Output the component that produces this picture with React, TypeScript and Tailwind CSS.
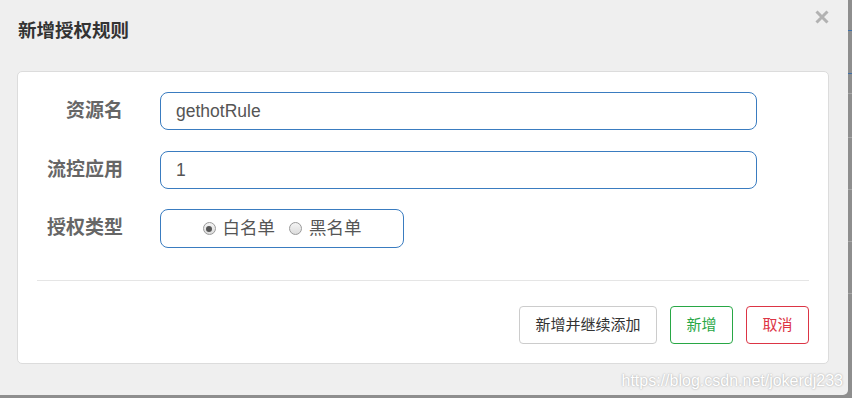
import React, { useState } from 'react';

const cjk = "font-['Liberation_Sans','Noto_Sans_CJK_SC',sans-serif]";

const Radio: React.FC<{ checked: boolean; label: string; onClick: () => void }> = ({ checked, label, onClick }) => (
  <label onClick={onClick} className="flex items-center gap-[7px] cursor-pointer">
    <span className="w-[13px] h-[13px] rounded-full border border-[#9a9a9a] bg-gradient-to-b from-[#f4f4f4] to-[#dcdcdc] flex items-center justify-center">
      {checked && <span className="w-[6px] h-[6px] rounded-full bg-[#555]" />}
    </span>
    <span className="text-[17.5px] text-[#555] leading-none">{label}</span>
  </label>
);

export default function App() {
  const [resource, setResource] = useState('gethotRule');
  const [app, setApp] = useState('1');
  const [strategy, setStrategy] = useState<'white' | 'black'>('white');

  return (
    <div className={`w-[852px] h-[398px] bg-[#8e8e8e] flex overflow-hidden ${cjk}`}>
      <div className="relative w-[848px] h-[395px] bg-[#efefef] rounded-br-[5px] shrink-0 flex flex-col">
        <div className="h-[71px] shrink-0 flex items-start justify-between pl-[18px] pr-[19px]">
          <h3 className="mt-[19px] text-[18.5px] font-bold text-[#333] leading-6">新增授权规则</h3>
          <button className="mt-[10px] w-[14px] h-[14px] cursor-pointer">
            <svg viewBox="0 0 14 14" width="14" height="14">
              <path d="M1.5 1.5 L12.5 12.5 M12.5 1.5 L1.5 12.5" stroke="#b2b2b2" strokeWidth="3" />
            </svg>
          </button>
        </div>

        <div className="ml-[17px] mr-[19px] h-[293px] shrink-0 bg-white border border-[#dcdcdc] rounded-[5px] flex flex-col px-[19px] pt-[20px]">
          <div className="flex flex-col gap-[20px]">
            <div className="flex items-center h-[38px]">
              <label className="w-[86px] text-right text-[19px] font-bold text-[#666]">资源名</label>
              <input
                value={resource}
                onChange={(e) => setResource(e.target.value)}
                className="ml-[37px] w-[597px] h-[38px] border border-[#3a7cc0] rounded-[8px] px-[15px] text-[17.5px] text-[#555] outline-none"
              />
            </div>
            <div className="flex items-center h-[38px] mt-[1px]">
              <label className="w-[86px] text-right text-[19px] font-bold text-[#666]">流控应用</label>
              <input
                value={app}
                onChange={(e) => setApp(e.target.value)}
                className="ml-[37px] w-[597px] h-[38px] border border-[#3a7cc0] rounded-[8px] px-[15px] text-[17.5px] text-[#555] outline-none"
              />
            </div>
            <div className="flex items-center h-[39px]">
              <label className="w-[86px] text-right text-[19px] font-bold text-[#666]">授权类型</label>
              <div className="ml-[37px] w-[244px] h-[39px] border border-[#3a7cc0] rounded-[8px] flex items-center justify-center gap-[14px]">
                <Radio checked={strategy === 'white'} label="白名单" onClick={() => setStrategy('white')} />
                <Radio checked={strategy === 'black'} label="黑名单" onClick={() => setStrategy('black')} />
              </div>
            </div>
          </div>

          <div className="mt-[32px] border-t border-[#e5e5e5]" />

          <div className="mt-[25px] flex justify-end gap-[13px]">
            <button className="w-[138px] h-[38px] border border-[#ccc] rounded-[4px] bg-white text-[15px] text-[#333] cursor-pointer">
              新增并继续添加
            </button>
            <button className="w-[63px] h-[38px] border border-[#28a745] rounded-[4px] bg-white text-[15px] text-[#28a745] cursor-pointer">
              新增
            </button>
            <button className="w-[63px] h-[38px] border border-[#dc3545] rounded-[4px] bg-white text-[15px] text-[#dc3545] cursor-pointer">
              取消
            </button>
          </div>
        </div>

        <span className="absolute right-[5px] top-[369px] text-[16px] text-white font-['Liberation_Sans',sans-serif] [text-shadow:0_0_2px_rgba(0,0,0,0.35)] pointer-events-none whitespace-nowrap">
          https://blog.csdn.net/jokerdj233
        </span>
      </div>

      <div className="flex-1 flex flex-col">
        <div className="h-[30px]" />
        <div className="h-[1px] bg-[#3d6fa8]" />
        <div className="h-[42px]" />
        <div className="h-[1px] bg-[#3d6fa8]" />
        <div className="h-[19px]" />
        <div className="h-[1px] bg-[#a8a8a8]" />
        <div className="h-[43px]" />
        <div className="h-[1px] bg-[#a8a8a8]" />
        <div className="h-[51px]" />
        <div className="h-[1px] bg-[#a8a8a8]" />
        <div className="h-[51px]" />
        <div className="h-[1px] bg-[#a8a8a8]" />
        <div className="h-[51px]" />
        <div className="h-[1px] bg-[#a8a8a8]" />
      </div>
    </div>
  );
}
